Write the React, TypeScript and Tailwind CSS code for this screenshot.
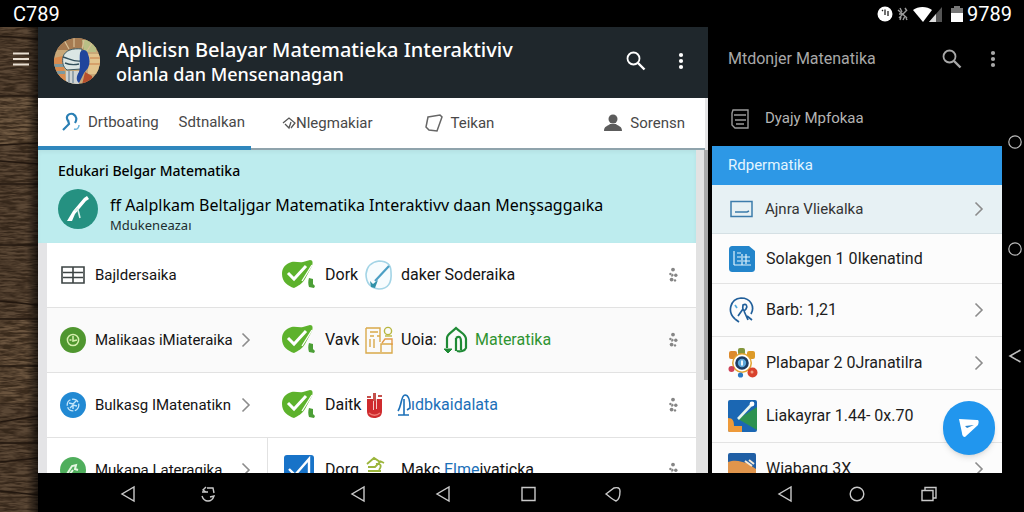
import type { ReactNode } from "react";
import { clsx } from "clsx";

/* ---------- small icons ---------- */

function SearchIcon({ className }: { className?: string }) {
    return (
        <svg viewBox="0 0 20 20" className={clsx("w-5 h-5", className)} fill="none" stroke="currentColor">
            <circle cx="7.5" cy="7.5" r="6" strokeWidth="1.8" />
            <path d="M12 12l6.5 6.5" strokeWidth="2.4" />
        </svg>
    );
}

function DotsIcon({ className }: { className?: string }) {
    return (
        <svg viewBox="0 0 6 18" className={clsx("w-[6px] h-[18px]", className)} fill="currentColor">
            <circle cx="3" cy="3" r="2.1" />
            <circle cx="3" cy="9" r="2.1" />
            <circle cx="3" cy="15" r="2.1" />
        </svg>
    );
}

function Chevron() {
    return (
        <svg viewBox="0 0 10 16" className="w-[10px] h-4 shrink-0 text-[#8c8c8c]" fill="none" stroke="currentColor" strokeWidth="1.6">
            <path d="M1.5 1.5L8 8l-6.5 6.5" />
        </svg>
    );
}

function MoreIcon() {
    return (
        <svg viewBox="0 0 10 16" className="w-[10px] h-4" fill="#858585">
            <circle cx="5" cy="2.6" r="1.9" />
            <circle cx="2.4" cy="7" r="1.2" />
            <circle cx="7.8" cy="8.2" r="1.7" />
            <path d="M4 6.5l2 1.5-2 2-1-1z" />
            <circle cx="3.6" cy="12.6" r="1.9" />
            <circle cx="7" cy="13.4" r="1.2" />
        </svg>
    );
}

function Avatar() {
    return (
        <svg viewBox="0 0 46 46" className="w-[46px] h-[46px] shrink-0">
            <defs>
                <clipPath id="avatar">
                    <circle cx="23" cy="23" r="23" />
                </clipPath>
            </defs>
            <g clipPath="url(#avatar)">
                <rect width="46" height="46" fill="#c9a878" />
                <path d="M0 0h46v12H0z" fill="#a67b52" />
                <path d="M28 2h14v12H30z" fill="#b9bf86" />
                <path d="M10 2l5 9M20 0v9M30 2l-2 9M38 5l-5 8" stroke="#d8bf95" strokeWidth="1.2" />
                <path d="M0 20l9-2 3 28H0z" fill="#d98b4f" />
                <path d="M0 26h10v3H0zM2 33h9v3H2z" fill="#7d9aa0" />
                <path d="M34 16h12v20H34z" fill="#e2c48d" />
                <path d="M36 20h10M35 26h11" stroke="#c77d48" strokeWidth="1.2" />
                <path d="M9 19c2-7 10-9 19-8l-1 20-14 1c-4-3-5-8-4-13z" fill="#dbe6e4" stroke="#3c5962" strokeWidth="1" />
                <path d="M9 19c7 2 11 5 18 4M11 25c5 2 9 2 14 1" stroke="#33505c" strokeWidth="1.4" fill="none" />
                <path d="M12 33h13v13H12z" fill="#cfd3d2" />
                <path d="M15 33v12M19 33v12" stroke="#8295a1" strokeWidth="1.5" />
                <path d="M26 15c1-4 7-4 8 1 2 5 2 10 0 14l-4 5-5 10c-3-2-3-7 0-11 2-6 0-12 1-19z" fill="#20459c" />
                <path d="M31 34l7 4 1 9H28z" fill="#b64f2c" />
            </g>
        </svg>
    );
}

function CheckBadge() {
    return (
        <svg viewBox="0 0 36 30" className="w-9 h-[30px] shrink-0">
            <path d="M8 3c5-3 9 0 14-1l7-2c3 0 3 3 2 6l-7 13c-3 5-7 7-11 9C7 26 1 22 1 14 1 8 4 5 8 3z" fill="#5db22c" />
            <path d="M21 21L31 5" stroke="#fff" strokeWidth="1.4" />
            <path d="M7 13l6 6L25 6" fill="none" stroke="#fff" strokeWidth="3" />
            <path d="M28 18l4 1v5l2 2-1 2-5-1c-1-3-1-6 0-9z" fill="#4c9f36" />
        </svg>
    );
}

/* ---------- data ---------- */

const subjects = [
    {
        name: "Bajldersaika",
        arrow: false,
        icon: (
            <svg viewBox="0 0 26 20" className="w-[26px] h-5" fill="none" stroke="#3d4444" strokeWidth="1.6">
                <path d="M2 2h22v16H2zM13 2v16M3 7.5h20M3 12.5h20" />
            </svg>
        ),
        badge: <CheckBadge />,
        word: "Dork",
        pic: (
            <svg viewBox="0 0 28 30" className="w-7 h-[30px]" fill="none">
                <path d="M14 1c8 0 12 3 12 11 1 11-3 17-12 17C5 28 1 23 1 14 2 6 6 2 14 1z" stroke="#a3d4e6" strokeWidth="1.6" fill="#f7fcfe" />
                <path d="M24 6L10 21" stroke="#4c9fc4" strokeWidth="2.2" />
                <path d="M5 21l3 3 5-4-3 8-4-1z" fill="#2f91a8" />
            </svg>
        ),
        rest: <span>daker Soderaika</span>,
    },
    {
        name: "Malikaas iMiateraika",
        arrow: true,
        icon: (
            <svg viewBox="0 0 26 26" className="w-[26px] h-[26px]">
                <circle cx="13" cy="13" r="13" fill="#4f962f" />
                <circle cx="13" cy="13" r="5.6" fill="none" stroke="#d6f0ae" strokeWidth="1.5" />
                <path d="M13 9v5l4-1M9.500 13h2" stroke="#d6f0ae" strokeWidth="1.5" fill="none" />
            </svg>
        ),
        badge: <CheckBadge />,
        word: "Vavk",
        pic: (
            <svg viewBox="0 0 28 28" className="w-7 h-7" fill="none" stroke="#d9a94a" strokeWidth="1.4">
                <path d="M1 2h14v8M1 2v25h26v-9H16v8M5 6h8M5 10h4M9 13v9M5 13v8M12 10h3v6" />
                <path d="M17 17l3-4h7v6" stroke="#e39a4a" />
                <circle cx="23" cy="5" r="3.6" stroke="#b7b63e" />
                <path d="M20 10h7" stroke="#b7b63e" />
            </svg>
        ),
        rest: (
            <>
                <span>Uoia:</span>
                <svg viewBox="0 0 26 28" className="w-[26px] h-7 mx-[6px]" fill="none" stroke="#1f8a35" strokeWidth="2.2">
                    <path d="M4 22V12c0-4 4-5 9-10 5 5 10 6 10 11v9c-1 3-6 4-9 3" />
                    <path d="M13 12c4-3 5 0 5 4v8M13 12v13" />
                    <path d="M1 23h8l-4 4z" fill="#1f8a35" strokeWidth="1" />
                </svg>
                <span className="text-[#2f9431]">Materatika</span>
            </>
        ),
    },
    {
        name: "Bulkasg IMatenatikn",
        arrow: true,
        icon: (
            <svg viewBox="0 0 26 26" className="w-[26px] h-[26px]">
                <circle cx="13" cy="13" r="13" fill="#2189d3" />
                <circle cx="13" cy="13" r="5.800" fill="none" stroke="#c3e6fb" strokeWidth="1.3" strokeDasharray="7 1.5" />
                <path d="M9 11l4 1 3-3M10 16l3-3 4 1M13 12v5" stroke="#c3e6fb" strokeWidth="1.4" fill="none" />
            </svg>
        ),
        badge: <CheckBadge />,
        word: "Daitk",
        pic: (
            <svg viewBox="0 0 28 28" className="w-7 h-7">
                <path d="M2 8h15v12c0 5-3 7-8 7s-7-3-7-7z" fill="#cf2b2e" />
                <path d="M8 9h1v10H8zM11 8h1v10h-1z" fill="#f6c9c6" />
                <path d="M2 5h4v2H2zM8 2h3v8H8zM13 4h4v2h-4z" fill="#c4514c" />
                <path d="M4 22c3 3 8 3 11 0" stroke="#f07b74" strokeWidth="1.4" fill="none" />
            </svg>
        ),
        rest: (
            <span className="text-[#1c70b8] flex items-center">
                <svg viewBox="0 0 14 24" className="w-[14px] h-6 -ml-1" fill="none" stroke="#1c70b8" strokeWidth="1.6">
                    <path d="M1 18C5 12 4 2 8 2s5 6 5 13l-3 2M7 6v16M1 22h11" />
                </svg>
                ıdbkaidalata
            </span>
        ),
    },
    {
        name: "Mukapa Lateragika",
        arrow: true,
        icon: (
            <svg viewBox="0 0 26 26" className="w-[26px] h-[26px]">
                <circle cx="13" cy="13" r="13" fill="#4fae5c" />
                <path d="M7 17l5-8 4-1-1 4 3 1M9 18l4-5" stroke="#e4f7e2" strokeWidth="2" fill="none" />
            </svg>
        ),
        badge: (
            <svg viewBox="0 0 36 30" className="w-9 h-[30px] shrink-0">
                <rect x="3" width="30" height="30" rx="3" fill="#1873c8" />
                <path d="M8 14l6 6L28 4v14" fill="none" stroke="#fff" strokeWidth="2.4" />
            </svg>
        ),
        word: "Dorg",
        pic: (
            <svg viewBox="0 0 28 28" className="w-7 h-7" fill="none" stroke="#9bb53c" strokeWidth="1.8">
                <path d="M2 8l7-6 6 4-5 5H3M11 8c5-1 6 2 3 6M15 5l4 2M3 15h13" />
            </svg>
        ),
        rest: (
            <span>
                Makc <span className="text-[#1c70b8]">Elme</span>ivaticka
            </span>
        ),
    },
];

const lessons = [
    {
        name: "Solakgen 1 0Ikenatind",
        arrow: false,
        icon: (
            <svg viewBox="0 0 28 28" className="w-7 h-7">
                <path d="M5 1h16l6 5v17c0 3-1 4-4 4H5c-3 0-4-1-4-4V5c0-3 1-4 4-4z" fill="#2385cb" />
                <path d="M6 6v14M6 20h17M9 8h4M9 12h4M9 16h4M14 9v11M15 12h7M15 16h7M18 9v10" stroke="#e2f3fc" strokeWidth="1.2" fill="none" />
            </svg>
        ),
    },
    {
        name: "Barb: 1,21",
        arrow: true,
        icon: (
            <svg viewBox="0 0 28 28" className="w-7 h-7" fill="none" stroke="#215f9a" strokeWidth="1.7">
                <path d="M7 23C-1 16 2 3 13 2c10 0 14 9 10 16" />
                <path d="M7 23l4 3M15 9c3-2 5 1 3 4s-4 1-3-4zM15 13l-5 7M16 15l4 9M19 20l5 4" />
                <path d="M7 9l2 3" stroke="#52a8dc" />
            </svg>
        ),
    },
    {
        name: "Plabapar 2 0Jranatilra",
        arrow: true,
        icon: (
            <svg viewBox="0 0 30 30" className="w-[30px] h-[30px]">
                <rect x="1" y="3" width="8" height="8" rx="2" fill="#dd8a2c" />
                <rect x="10" y="0" width="7" height="7" rx="2" fill="#84963c" />
                <rect x="19" y="3" width="8" height="8" rx="2" fill="#dd9a27" />
                <circle cx="14" cy="15" r="10" fill="#e2a22e" />
                <circle cx="14" cy="15" r="8.500" fill="#fff" />
                <circle cx="14" cy="15" r="5.500" fill="#5fa9dc" stroke="#1d3d63" strokeWidth="2.600" />
                <path d="M14 12.500v5" stroke="#fff" strokeWidth="1.800" />
                <circle cx="3.500" cy="21" r="3" fill="#cf4257" />
                <circle cx="12.500" cy="27" r="2.600" fill="#2b78c2" />
                <circle cx="24.500" cy="24.500" r="5" fill="#d9422d" />
                <circle cx="24" cy="24" r="1.500" fill="#f2a083" />
            </svg>
        ),
    },
    {
        name: "Liakayrar 1.44- 0x.70",
        arrow: false,
        icon: (
            <svg viewBox="0 0 30 32" className="w-[30px] h-8">
                <rect width="29" height="32" rx="2" fill="#1b67b3" />
                <path d="M29 7v23L10 19z" fill="#2d9150" />
                <path d="M10 19L25 3" stroke="#e8f5ef" strokeWidth="2.600" />
                <circle cx="24" cy="4" r="2.400" fill="#fff" />
                <path d="M0 18c5 0 6 3 6 8h8v6H2c-2 0-2-1-2-3z" fill="#ee9a3a" />
            </svg>
        ),
    },
    {
        name: "Wiabang 3X",
        arrow: true,
        icon: (
            <svg viewBox="0 0 30 32" className="w-[30px] h-8">
                <rect width="28" height="32" rx="2" fill="#205fa5" />
                <path d="M0 9c8-3 14 0 19 1l9 6v16H0z" fill="#e0954c" />
                <path d="M17 8l7 5M21 7l5 4" stroke="#f6ead8" strokeWidth="2" />
            </svg>
        ),
    },
];

/* ---------- pieces ---------- */

function WoodRail() {
    return (
        <aside className="relative w-[38px] shrink-0 bg-[#5a4735] overflow-hidden">
            <svg viewBox="0 0 38 485" preserveAspectRatio="none" className="absolute inset-0 w-full h-full" fill="none">
                <defs>
                    <filter id="grain" x="0" y="0" width="100%" height="100%" colorInterpolationFilters="sRGB">
                        <feTurbulence type="fractalNoise" baseFrequency="0.06 0.5" numOctaves="3" seed="4" />
                        <feColorMatrix values="0 0 0 0 0.15  0 0 0 0 0.1  0 0 0 0 0.06  0 0 0 3 -1" />
                    </filter>
                    <linearGradient id="edge">
                        <stop offset="0.7" stopColor="#000" stopOpacity="0" />
                        <stop offset="1" stopColor="#000" stopOpacity="0.6" />
                    </linearGradient>
                </defs>
                <rect y="69" width="38" height="48" fill="#6e5841" />
                <rect y="292" width="38" height="84" fill="#6a543e" />
                <rect width="38" height="485" filter="url(#grain)" opacity="0.7" />
                <path d="M0 9l38 3M0 69h38M0 118l38-2M0 134l38 3M0 157h38M0 218h38M0 274l38 4M0 292h38M0 339h38M0 395l38-6M0 416h38M0 435l38-4M0 464l38 4" stroke="#22170f" strokeWidth="1.500" />
                <rect width="38" height="485" fill="url(#edge)" />
            </svg>
            <button type="button" aria-label="Menu" className="relative mt-[25px] ml-[13px] block">
                <svg viewBox="0 0 16 14" className="w-4 h-[14px]" stroke="#e9dfd2" strokeWidth="2">
                    <path d="M0 1.500h16M0 7h16M0 12.500h16" />
                </svg>
            </button>
        </aside>
    );
}

function Tab({ children, className }: { children: ReactNode; className?: string }) {
    return (
        <button type="button" className={clsx("flex items-center gap-2 text-[15px] text-[#484848]", className)}>
            {children}
        </button>
    );
}

function StatusBar() {
    return (
        <header className="h-[27px] shrink-0 flex items-center justify-between pl-[13px] pr-3 text-white text-xl leading-none">
            <span>C789</span>
            <div className="flex items-center gap-1">
                <svg viewBox="0 0 16 16" className="w-4 h-4">
                    <circle cx="8" cy="8" r="7.500" fill="#fff" />
                    <path d="M8 3.500V9M5 5l1-1M11 5v5" stroke="#222" strokeWidth="1.300" />
                </svg>
                <svg viewBox="0 0 12 16" className="w-3 h-4" fill="none" stroke="#9b9b9b" strokeWidth="1.400">
                    <path d="M1 4l9 8M2 12l8-8M3 2l2 4M8 2l2 3M2 8h3M8 10l-2 4M4 11l-1 3M9 12l1 2" />
                </svg>
                <svg viewBox="0 0 30 16" className="w-[30px] h-4">
                    <path d="M0 4C5 0 14 0 19 4l-9 12z" fill="#fff" />
                    <path d="M16 16L29 1v15z" fill="#555" />
                    <path d="M16 16l7-8v8z" fill="#ddd" />
                </svg>
                <svg viewBox="0 0 12 16" className="w-3 h-4 ml-1">
                    <path d="M3 0h6v2h3v14H0V2h3z" fill="#777" />
                    <path d="M0 7h12v9H0z" fill="#fff" />
                </svg>
                <span>9789</span>
            </div>
        </header>
    );
}

function NavButton({ label, children }: { label: string; children: ReactNode }) {
    return (
        <button type="button" aria-label={label} className="text-[#c9c9c9]">
            <svg viewBox="0 0 20 20" className="w-5 h-5" fill="none" stroke="currentColor" strokeWidth="1.400">
                {children}
            </svg>
        </button>
    );
}

const backPath = <path d="M16 3v14L4 10z" />;

function NavBar() {
    return (
        <nav className="h-[39px] shrink-0 flex items-center pl-20 pt-[2px] bg-black">
            <div className="flex gap-[60px]">
                <NavButton label="Kembali">{backPath}</NavButton>
                <NavButton label="Putar">
                    <path d="M8 3L5 6l3 2M4 8h6M9 4h6l1 5M4 12c1 3 3 5 6 5s5-2 6-5l-4 1" />
                </NavButton>
            </div>
            <div className="flex gap-[65px] ml-[130px]">
                <NavButton label="Kembali">{backPath}</NavButton>
                <NavButton label="Kembali">{backPath}</NavButton>
                <NavButton label="Terbaru">
                    <path d="M4 3.500h13v13H4z" />
                </NavButton>
                <NavButton label="Kembali">
                    <path d="M3 10l8-6c4-1 6 0 6 3 0 5-1 9-4 10-3-1-6-4-10-7z" />
                </NavButton>
            </div>
            <div className="flex gap-[52px] ml-[152px]">
                <NavButton label="Kembali">{backPath}</NavButton>
                <NavButton label="Beranda">
                    <circle cx="10" cy="10" r="6.800" />
                </NavButton>
                <NavButton label="Terbaru">
                    <path d="M3 6.500h11v10H3zM6 6V3.500h11V14h-3" />
                </NavButton>
            </div>
        </nav>
    );
}

function MainPanel() {
    return (
        <main className="flex-1 min-w-0 flex flex-col overflow-hidden bg-[#e4e4e6]">
            <div className="h-[71px] shrink-0 flex items-center pl-4 pr-6 pb-1 bg-[#1f272c] text-white">
                <Avatar />
                <h1 className="ml-4 pt-[2px] flex-1 text-xl font-medium font-['Noto_Sans']">
                    <span className="block leading-6">Aplicisn Belayar Matematieka Interaktiviv</span>
                    <span className="block text-lg leading-6">olanla dan Mensenanagan</span>
                </h1>
                <button type="button" aria-label="Cari" className="mr-8">
                    <SearchIcon />
                </button>
                <button type="button" aria-label="Lainnya">
                    <DotsIcon />
                </button>
            </div>

            <div className="h-[52px] shrink-0 mr-[3px] flex bg-white border-b-2 border-[#8fa3ac]">
                <div className="-mb-[2px] w-[213px] flex border-b-4 border-[#2f87bd]">
                    <Tab className="ml-6">
                        <svg viewBox="0 0 18 20" className="w-[18px] h-5" fill="none" stroke="#2a7fb4" strokeWidth="2.200">
                            <path d="M6 9C3 4 7 1 11 2c4 2 4 6 2 9M6 8l1 4-6 6" />
                            <path d="M12 17c3 1 5-1 5-4" stroke="#6db4da" strokeWidth="1.500" />
                        </svg>
                        Drtboating
                    </Tab>
                    <Tab className="ml-5 text-[#26414c]">Sdtnalkan</Tab>
                </div>
                <Tab className="ml-[31px]">
                    <span className="flex items-center">
                        <svg viewBox="0 0 14 14" className="w-[14px] h-[14px]" fill="none" stroke="#555" strokeWidth="1.300">
                            <path d="M1 7l6-5 6 5-4 5M3 8l4 4 2-6" />
                        </svg>
                        Nlegmakiar
                    </span>
                </Tab>
                <Tab className="ml-[52px]">
                    <svg viewBox="0 0 18 18" className="w-[18px] h-[18px]" fill="none" stroke="#666" strokeWidth="1.500">
                        <path d="M3 3l12-2 2 2-5 14-8-1-3-3z" />
                    </svg>
                    Teikan
                </Tab>
                <Tab className="ml-auto mr-5">
                    <svg viewBox="0 0 18 18" className="w-[18px] h-[18px]" fill="#5c5c5c">
                        <circle cx="9" cy="5" r="4.500" />
                        <path d="M0 17c0-5 4-5 6-7h6c2 2 6 2 6 7z" />
                    </svg>
                    Sorensn
                </Tab>
            </div>

            <div className="flex-1 min-h-0 flex">
                <div className="flex-1 min-w-0">
                    <section className="h-[93px] pt-[11px] pl-5 bg-[#bdecee] shadow-inner text-black font-['Noto_Sans']">
                        <h2 className="text-sm leading-5 font-medium">Edukari Belgar Matematika</h2>
                        <div className="mt-2 flex gap-3">
                            <svg viewBox="0 0 40 40" className="w-10 h-10 shrink-0">
                                <circle cx="20" cy="20" r="20" fill="#259181" />
                                <path d="M9 32l6-10L26 9l3-2 2 3-3 2-11 13-3 7z" fill="#fff" />
                                <path d="M20 21l2 8M17 22l3-3" stroke="#d8f0ea" strokeWidth="1.600" />
                            </svg>
                            <div className="pt-[6px]">
                                <p className="text-base leading-5">ff Aalplkam Beltaljgar Matematika Interaktivv daan Menşsaggaıka</p>
                                <p className="text-[13px] leading-5 text-[#1d2d30]">Mdukeneazaı</p>
                            </div>
                        </div>
                    </section>

                    <ul className="ml-[9px] bg-white text-base text-[#141414]">
                        {subjects.map((s, i) => (
                            <li key={s.name} className={clsx("h-[65px] flex items-center border-b border-[#e2e2e2] pr-[18px]", i === 1 && "bg-[#fafafa]")}>
                                <a
                                    href="#materi"
                                    className={clsx(
                                        "w-[221px] h-full shrink-0 flex items-center pl-[13px] pr-4 border-r",
                                        i === 3 ? "border-[#e2e2e2]" : "border-transparent"
                                    )}
                                >
                                    <span className="w-[26px] mr-[9px]">{s.icon}</span>
                                    <span className="flex-1 text-[15px] whitespace-nowrap">{s.name}</span>
                                    {s.arrow && <Chevron />}
                                </a>
                                <div className="flex-1 flex items-center pl-[13px]">
                                    {s.badge}
                                    <span className="w-10 ml-2">{s.word}</span>
                                    <span className="w-7 mr-2">{s.pic}</span>
                                    {s.rest}
                                </div>
                                <button type="button" aria-label="Opsi">
                                    <MoreIcon />
                                </button>
                            </li>
                        ))}
                    </ul>
                </div>
                <div className="w-3 shrink-0 bg-[#e2e2e2]">
                    <div className="ml-2 w-1 h-[230px] bg-[#a9a9a9]" />
                </div>
            </div>
        </main>
    );
}

function SidePanel() {
    return (
        <section className="relative w-[290px] shrink-0 flex flex-col overflow-hidden text-base">
            <div className="h-16 shrink-0 flex items-center pl-4 pr-[6px] text-[#a8a8a8]">
                <h2 className="flex-1">Mtdonjer Matenatika</h2>
                <button type="button" aria-label="Cari" className="mr-7">
                    <SearchIcon />
                </button>
                <button type="button" aria-label="Lainnya">
                    <DotsIcon />
                </button>
            </div>
            <a href="#profil" className="h-[55px] shrink-0 flex items-center gap-[15px] pl-[18px] text-[15px] text-[#b4b4b4]">
                <svg viewBox="0 0 20 20" className="w-5 h-5" fill="none" stroke="#9a9a9a" strokeWidth="1.400">
                    <path d="M3 1h15v18H5l-3-3V4zM4 6h12M5 11h11M6 15h8" />
                </svg>
                Dyajy Mpfokaa
            </a>
            <h3 className="h-[39px] shrink-0 flex items-center pl-4 bg-[#2d98e6] text-[15px] text-[#e3f5ff]">Rdpermatika</h3>
            <a href="#pelajaran" className="h-[49px] shrink-0 flex items-center pl-[18px] pr-[18px] bg-[#e7f1f4] text-[15px] text-[#333] border-b border-[#d5e0e4]">
                <svg viewBox="0 0 24 18" className="w-6 h-[18px] mr-[11px]" fill="none" stroke="#3c7cab" strokeWidth="1.500">
                    <path d="M1 1.500h21v15H1zM5 12h12l2-1" />
                </svg>
                <span className="flex-1">Ajnra Vliekalka</span>
                <Chevron />
            </a>
            <ul className="flex-1 bg-[#fcfcfc] text-[#1d1d1d]">
                {lessons.map((l, i) => (
                    <li key={l.name} className="border-b border-[#e3e3e3]">
                        <a href="#pelajaran" className={clsx("flex items-center pl-4 pr-[18px]", i === 0 ? "h-[49px]" : "h-[52px]")}>
                            <span className="w-[30px] mr-2">{l.icon}</span>
                            <span className="flex-1">{l.name}</span>
                            {l.arrow && <Chevron />}
                        </a>
                    </li>
                ))}
            </ul>
            <button
                type="button"
                aria-label="Kirim"
                className="absolute right-[7px] bottom-[18px] w-[52px] h-[54px] rounded-full bg-[#2196ee] shadow-md flex items-center justify-center"
            >
                <svg viewBox="0 0 20 20" className="w-5 h-5">
                    <path d="M0 1l18 1c2 0 2 2 1 5L6 19C4 19 3 17 3 15z" fill="#fff" />
                    <path d="M6 8l9-1-7 3z" fill="#2a85cf" />
                </svg>
            </button>
        </section>
    );
}

function EdgeRail() {
    return (
        <div className="w-[22px] shrink-0 flex flex-col items-end gap-[93px] pt-[108px] pr-[2px] bg-black text-[#bdbdbd]">
            <svg viewBox="0 0 14 14" className="w-[14px] h-[14px]" fill="none" stroke="currentColor" strokeWidth="1.200">
                <circle cx="7" cy="7" r="6.200" />
            </svg>
            <svg viewBox="0 0 14 14" className="w-[14px] h-[14px]" fill="none" stroke="currentColor" strokeWidth="1.200">
                <circle cx="7" cy="7" r="6.200" />
            </svg>
            <svg viewBox="0 0 14 14" className="w-[14px] h-[14px]" fill="none" stroke="currentColor" strokeWidth="1.600">
                <path d="M12.500 1L2 7l10.500 6" />
            </svg>
        </div>
    );
}

export default function App() {
    return (
        <div className="h-screen flex flex-col overflow-hidden bg-black font-[Roboto,sans-serif]">
            <StatusBar />
            <div className="flex-1 min-h-0 flex">
                <WoodRail />
                <div className="flex-1 min-w-0 flex flex-col">
                    <div className="flex-1 min-h-0 flex">
                        <MainPanel />
                        <div className="w-1 shrink-0 bg-black" />
                        <SidePanel />
                        <EdgeRail />
                    </div>
                    <NavBar />
                </div>
            </div>
        </div>
    );
}
